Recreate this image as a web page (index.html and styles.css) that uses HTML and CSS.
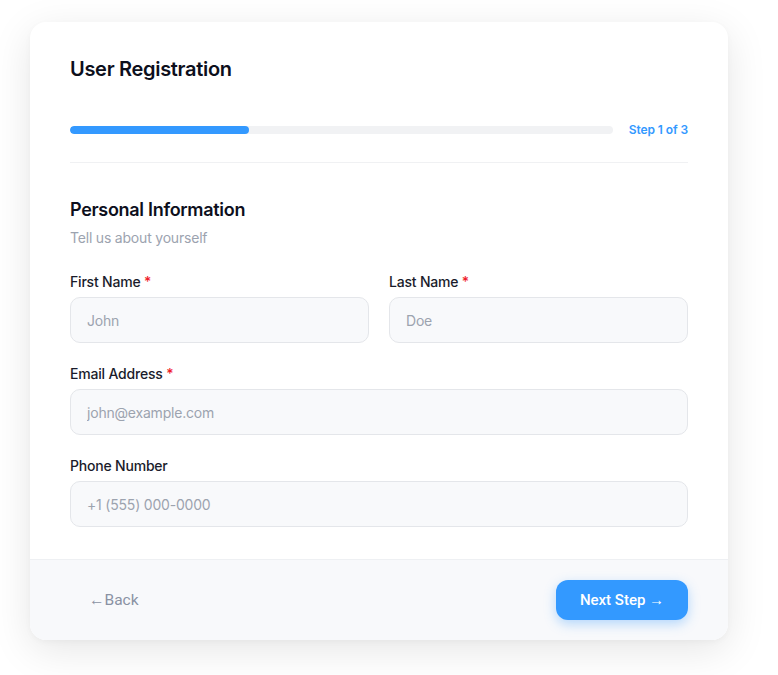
FILE: index.html
```html
<!DOCTYPE html>
<html lang="en">
<head>
<meta charset="utf-8">
<title>User Registration</title>
<link rel="stylesheet" href="styles.css">
</head>
<body>
<div class="card">
  <div class="header">
    <h1 class="title">User Registration</h1>
    <div class="progress-row">
      <div class="bar"><div class="fill" style="width:33%"></div></div>
      <span class="step">Step 1 of 3</span>
    </div>
  </div>
  <div class="body">
    <h2 class="section-title">Personal Information</h2>
    <p class="section-sub">Tell us about yourself</p>
    <div class="row">
      <div class="field">
        <label class="label">First Name <span class="req">*</span></label>
        <input class="input" type="text" placeholder="John">
      </div>
      <div class="field">
        <label class="label">Last Name <span class="req">*</span></label>
        <input class="input" type="text" placeholder="Doe">
      </div>
    </div>
    <div class="field">
      <label class="label">Email Address <span class="req">*</span></label>
      <input class="input" type="email" placeholder="john@example.com">
    </div>
    <div class="field">
      <label class="label">Phone Number</label>
      <input class="input" type="tel" placeholder="+1 (555) 000-0000">
    </div>
  </div>
  <div class="footer">
    <button class="btn-back">←Back</button>
    <button class="btn-next">Next Step →</button>
  </div>
</div>
</body>
</html>
```
FILE: styles.css
```css
* { box-sizing: border-box; }
body {
  margin: 0;
  padding: 22px 50px 40px 30px;
  background: #ffffff;
  font-family: Inter, "Open Sans", sans-serif;
  color: #111322;
}
.card {
  width: 698px;
  background: #fff;
  border-radius: 16px;
  box-shadow: 0 10px 40px rgba(0,0,0,0.10), 0 2px 6px rgba(0,0,0,0.03);
  overflow: hidden;
}
.header {
  margin: 0 40px;
  padding: 32px 0 25px;
  border-bottom: 1px solid #f0f1f3;
}
.title {
  margin: 0;
  font-size: 20px;
  line-height: 30px;
  font-weight: 600;
  letter-spacing: -0.3px;
  color: #0d0f1c;
}
.progress-row {
  display: flex;
  align-items: center;
  gap: 16px;
  margin-top: 38px;
}
.bar {
  flex: 1;
  height: 8px;
  border-radius: 4px;
  background: #f1f2f4;
  overflow: hidden;
}
.fill {
  height: 100%;
  background: #3399ff;
  border-radius: 4px;
}
.step {
  font-size: 12px;
  font-weight: 600;
  color: #3399ff;
  letter-spacing: -0.1px;
}
.body {
  padding: 33px 40px 32px;
  display: flex;
  flex-direction: column;
  gap: 21px;
}
.section-title {
  margin: 0;
  font-size: 18px;
  line-height: 27px;
  font-weight: 600;
  letter-spacing: -0.3px;
  color: #0d0f1c;
}
.section-sub {
  margin: -16px 0 3px;
  font-size: 14px;
  line-height: 20px;
  color: #9ca3af;
  letter-spacing: -0.2px;
}
.row {
  display: grid;
  grid-template-columns: 1fr 1fr;
  gap: 20px;
}
.field {
  display: flex;
  flex-direction: column;
  gap: 5px;
}
.label {
  font-size: 14px;
  line-height: 20px;
  font-weight: 500;
  color: #1a1c2b;
  letter-spacing: -0.2px;
}
.req { color: #ef1c2b; }
.input {
  height: 46px;
  border: 1px solid #e4e6ea;
  border-radius: 10px;
  background: #f8f9fb;
  padding: 0 16px;
  font-family: inherit;
  font-size: 14px;
  letter-spacing: -0.2px;
  color: #111322;
  outline: none;
}
.input::placeholder { color: #9ca3af; }
.footer {
  display: flex;
  justify-content: space-between;
  align-items: center;
  padding: 20px 40px;
  background: #f8f9fb;
  border-top: 1px solid #eef0f3;
}
.btn-back {
  border: none;
  background: transparent;
  font-family: Roboto, "Liberation Sans", sans-serif;
  font-size: 15.5px;
  color: #8a92a3;
  padding: 10px 19px;
  height: 40px;
  cursor: pointer;
}
.btn-next {
  border: none;
  background: #3399ff;
  color: #fff;
  font-family: Roboto, "Liberation Sans", sans-serif;
  font-size: 15px;
  font-weight: 500;
  height: 40px;
  width: 132px;
  border-radius: 12px;
  box-shadow: 0 4px 12px rgba(51,153,255,0.35);
  cursor: pointer;
}
```
